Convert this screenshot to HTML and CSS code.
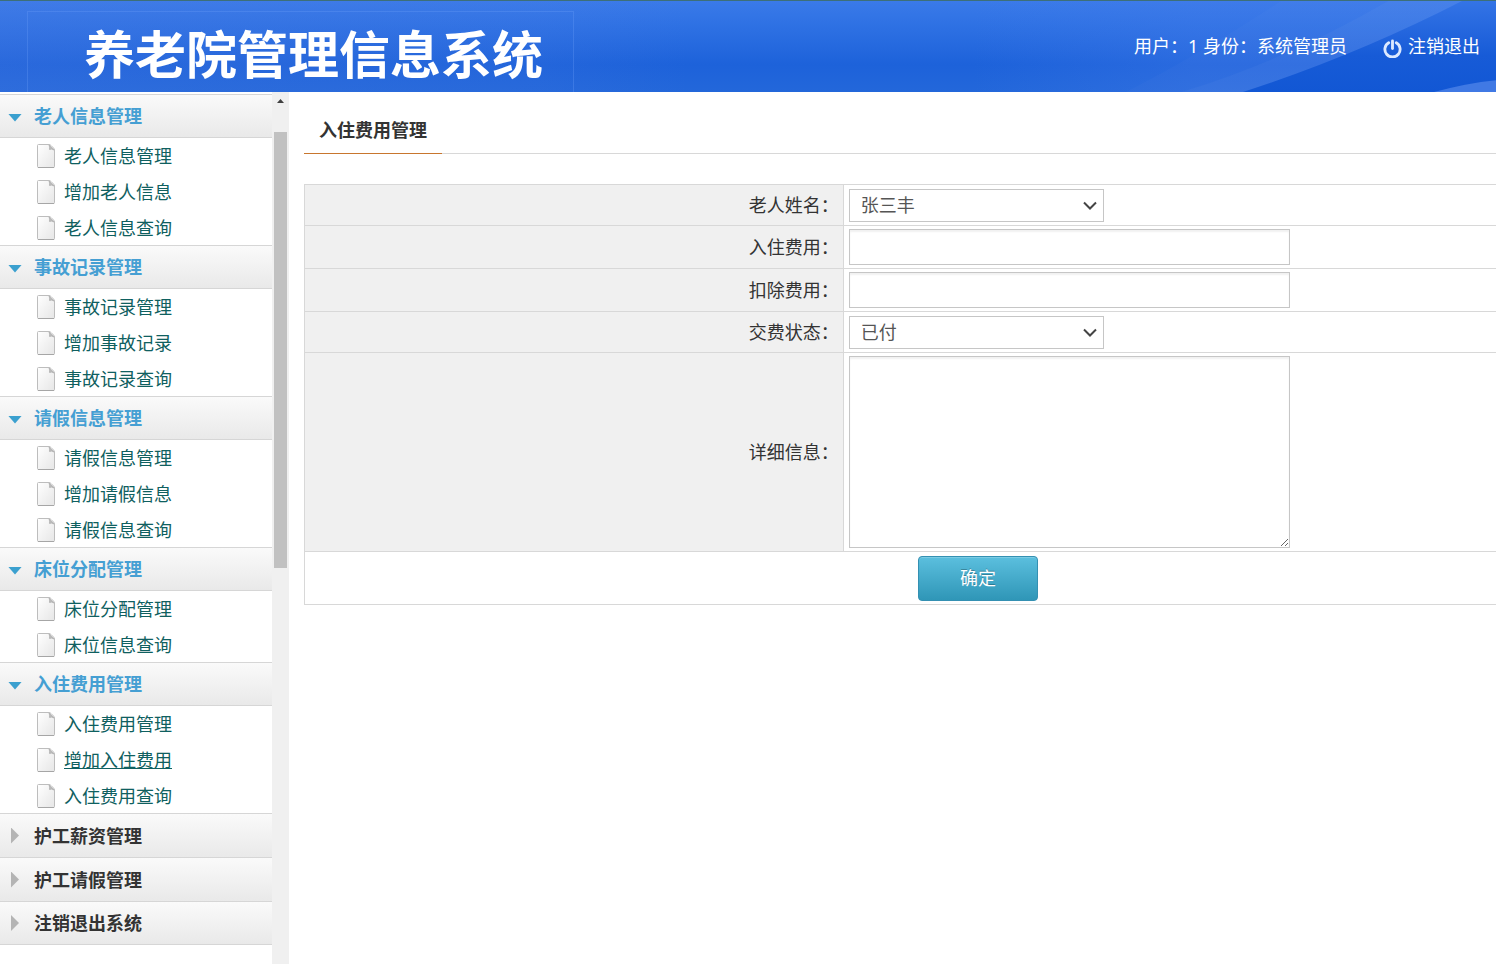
FILE: index.html
```html
<!DOCTYPE html>
<html lang="zh-CN">
<head>
<meta charset="utf-8">
<title>养老院管理信息系统</title>
<link rel="stylesheet" href="styles.css">
</head>
<body>
<svg class="sprite" aria-hidden="true">
  <defs>
    <linearGradient id="paper" x1="0" y1="0" x2="1" y2="1">
      <stop offset="0" stop-color="#ffffff"/>
      <stop offset="1" stop-color="#e6e6e6"/>
    </linearGradient>
    <symbol id="doc" viewBox="0 0 20 26">
      <path d="M2.500 1.500H13Q14 1.500 15 2.500L17.500 5Q18.500 6 18.500 7V23.500Q18.500 24.500 17.500 24.500H2.500Q1.500 24.500 1.500 23.500V2.500Q1.500 1.500 2.500 1.500Z" fill="url(#paper)" stroke="#bdbdbd"/>
      <path d="M2 24.500H18" stroke="#a6a6a6"/>
      <path d="M13 2L18 7Q15.500 5.500 13.500 6.500Q14 4 13 2Z" fill="#bcbcbc" stroke="#b0b0b0" stroke-width=".8"/>
    </symbol>
    <symbol id="chevron" viewBox="0 0 14 9">
      <path d="M1 1.500L7 7.500L13 1.500" fill="none" stroke="#444" stroke-width="2"/>
    </symbol>
  </defs>
</svg>

<header class="header">
  <svg class="header-art" viewBox="0 0 400 92" preserveAspectRatio="none" aria-hidden="true">
    <defs>
      <linearGradient id="deep" x1="0" y1="0" x2="0" y2="1">
        <stop offset="0" stop-color="#3474e6"/>
        <stop offset=".6" stop-color="#175bd7"/>
        <stop offset="1" stop-color="#1257d4"/>
      </linearGradient>
    </defs>
    <path d="M30 92Q110 50 185 0H400V92Z" fill="#fff" fill-opacity=".02"/>
    <path d="M85 92Q190 60 292 0H400V92Z" fill="#fff" fill-opacity=".03"/>
    <path d="M147 92Q260 55 366 0H400V92Z" fill="url(#deep)"/>
    <path d="M338 92Q370 83 400 80V92Z" fill="#4079e4"/>
  </svg>
  <div class="brand"><h1 class="brand-title">养老院管理信息系统</h1></div>
  <div class="account">
    <span>用户：1 身份：系统管理员</span>
    <a class="logout" href="#">
      <svg class="power" viewBox="0 0 20 20" aria-hidden="true">
        <path d="M6 4A8 8 0 1 0 14 4" fill="none" stroke="#dce9ff" stroke-width="3" stroke-linecap="round"/>
        <path d="M10 2V10" stroke="#dce9ff" stroke-width="3" stroke-linecap="round"/>
      </svg>
      注销退出
    </a>
  </div>
</header>

<div class="body">
  <aside class="sidebar">
    <nav class="menu">
      <section class="group">
        <button class="group-head open" type="button">老人信息管理</button>
        <ul class="items">
          <li><a href="#"><svg class="doc"><use href="#doc"/></svg><span>老人信息管理</span></a></li>
          <li><a href="#"><svg class="doc"><use href="#doc"/></svg><span>增加老人信息</span></a></li>
          <li><a href="#"><svg class="doc"><use href="#doc"/></svg><span>老人信息查询</span></a></li>
        </ul>
      </section>
      <section class="group">
        <button class="group-head open" type="button">事故记录管理</button>
        <ul class="items">
          <li><a href="#"><svg class="doc"><use href="#doc"/></svg><span>事故记录管理</span></a></li>
          <li><a href="#"><svg class="doc"><use href="#doc"/></svg><span>增加事故记录</span></a></li>
          <li><a href="#"><svg class="doc"><use href="#doc"/></svg><span>事故记录查询</span></a></li>
        </ul>
      </section>
      <section class="group">
        <button class="group-head open" type="button">请假信息管理</button>
        <ul class="items">
          <li><a href="#"><svg class="doc"><use href="#doc"/></svg><span>请假信息管理</span></a></li>
          <li><a href="#"><svg class="doc"><use href="#doc"/></svg><span>增加请假信息</span></a></li>
          <li><a href="#"><svg class="doc"><use href="#doc"/></svg><span>请假信息查询</span></a></li>
        </ul>
      </section>
      <section class="group">
        <button class="group-head open" type="button">床位分配管理</button>
        <ul class="items">
          <li><a href="#"><svg class="doc"><use href="#doc"/></svg><span>床位分配管理</span></a></li>
          <li><a href="#"><svg class="doc"><use href="#doc"/></svg><span>床位信息查询</span></a></li>
        </ul>
      </section>
      <section class="group">
        <button class="group-head open" type="button">入住费用管理</button>
        <ul class="items">
          <li><a href="#"><svg class="doc"><use href="#doc"/></svg><span>入住费用管理</span></a></li>
          <li><a class="current" href="#"><svg class="doc"><use href="#doc"/></svg><span>增加入住费用</span></a></li>
          <li><a href="#"><svg class="doc"><use href="#doc"/></svg><span>入住费用查询</span></a></li>
        </ul>
      </section>
      <section class="group"><button class="group-head" type="button">护工薪资管理</button></section>
      <section class="group"><button class="group-head" type="button">护工请假管理</button></section>
      <section class="group"><button class="group-head" type="button">注销退出系统</button></section>
    </nav>
    <div class="scrollbar" aria-hidden="true">
      <span class="scroll-up"></span>
      <span class="scroll-thumb"></span>
    </div>
  </aside>

  <main class="main">
    <div class="tabs"><h2 class="tab">入住费用管理</h2></div>
    <form>
      <table class="form-table">
        <tr class="short">
          <th><label for="name">老人姓名：</label></th>
          <td>
            <div class="select">
              <select id="name"><option>张三丰</option></select>
              <svg class="chevron" aria-hidden="true"><use href="#chevron"/></svg>
            </div>
          </td>
        </tr>
        <tr>
          <th><label for="fee">入住费用：</label></th>
          <td><input id="fee" type="text"></td>
        </tr>
        <tr>
          <th><label for="deduct">扣除费用：</label></th>
          <td><input id="deduct" type="text"></td>
        </tr>
        <tr class="short">
          <th><label for="state">交费状态：</label></th>
          <td>
            <div class="select">
              <select id="state"><option>已付</option></select>
              <svg class="chevron" aria-hidden="true"><use href="#chevron"/></svg>
            </div>
          </td>
        </tr>
        <tr>
          <th><label for="detail">详细信息：</label></th>
          <td><textarea id="detail"></textarea></td>
        </tr>
        <tr class="submit-row">
          <td colspan="2"><button class="submit" type="button">确定</button></td>
        </tr>
      </table>
    </form>
  </main>
</div>
</body>
</html>
```

FILE: styles.css
```css
* { box-sizing: border-box; }

html, body { height: 100%; }

body {
  margin: 0;
  display: flex;
  flex-direction: column;
  overflow: hidden;
  background: #fff;
  color: #333;
  font: 18px/24px "Noto Sans", "Noto Sans CJK SC", sans-serif;
}

button, input, select, textarea { font: inherit; }

.sprite { position: absolute; width: 0; height: 0; }

/* header */
.header {
  position: relative;
  flex: none;
  display: flex;
  justify-content: space-between;
  height: 92px;
  padding: 0 16px 0 27px;
  border-top: 1px solid #3d6f78;
  background:
    linear-gradient(90deg, rgba(80, 125, 225, .25), rgba(80, 125, 225, .12) 36%, transparent 46%, transparent 65%, rgba(70, 125, 235, .3) 80%),
    linear-gradient(#3a7ae8, #3375e6 15%, #1d62da 70%, #2367da);
  color: #fff;
}

.header-art { position: absolute; top: 0; right: 0; width: 400px; height: 100%; }

.brand {
  position: relative;
  margin-top: 10px;
  padding: 0 30px 0 56px;
  border: 1px solid rgba(110, 160, 250, .3);
  border-bottom: 0;
}

.brand-title {
  margin: 0;
  font-size: 51px;
  line-height: 84px;
  font-weight: 700;
  white-space: nowrap;
}

.account {
  position: relative;
  display: flex;
  gap: 36px;
  height: 90px;
  align-items: center;
  white-space: nowrap;
}

.logout { display: flex; align-items: center; gap: 6px; color: #fff; text-decoration: none; }
.power { width: 19px; height: 19px; margin-top: 4px; }

/* sidebar */
.body { flex: 1; display: flex; min-height: 0; }

.sidebar { flex: none; display: flex; width: 289px; }

.menu { flex: 1; padding-top: 2px; overflow: hidden; }

.group-head {
  display: flex;
  align-items: center;
  width: 100%;
  height: 44px;
  padding: 0;
  border: 0;
  border-top: 1px solid #d6d6d6;
  background: linear-gradient(#fafafa, #e9e9e9);
  color: #333;
  font-weight: 700;
  text-align: left;
}

.group-head::before {
  content: "";
  width: 8px;
  height: 16px;
  margin: 0 15px 0 11px;
  background: #b4b4b4;
  clip-path: polygon(0 0, 100% 50%, 0 100%);
}

.group-head.open { border-bottom: 1px solid #d6d6d6; color: #459fd3; }

.group-head.open::before {
  width: 14px;
  height: 8px;
  margin: 3px 12px 0 8px;
  background: #3ba0cf;
  clip-path: polygon(0 0, 100% 0, 50% 100%);
}

.group:last-child .group-head { border-bottom: 1px solid #d6d6d6; }

.items { margin: 0 0 -1px; padding: 0; list-style: none; }

/* keeps the next heading's top border above the last item */
.group { position: relative; }

.items a {
  display: flex;
  align-items: center;
  gap: 8px;
  height: 36px;
  padding-left: 36px;
  color: #0f6060;
  text-decoration: none;
}

.items .current { text-decoration: underline; }

.doc { width: 20px; height: 26px; }

.scrollbar {
  display: flex;
  flex-direction: column;
  align-items: center;
  width: 17px;
  background: #f0f0f0;
}

.scroll-up {
  width: 7px;
  height: 4px;
  margin: 7px 0 29px;
  background: #404040;
  clip-path: polygon(50% 0, 100% 100%, 0 100%);
}

.scroll-thumb { width: 13px; height: 50%; background: #c1c1c1; }

/* content */
.main { flex: 1; min-width: 0; padding: 16px 0 0 15px; overflow: hidden; }

.tabs { display: flex; margin-bottom: 30px; border-bottom: 1px solid #d8d8d8; }

.tab {
  margin: 0 0 -1px;
  padding: 0 15px;
  border-bottom: 1px solid #c8762e;
  font-size: 18px;
  line-height: 45px;
  font-weight: 700;
}

.form-table {
  width: calc(100% + 156px);
  border-collapse: collapse;
  border: 1px solid #d8d8d8;
}

.form-table th, .form-table td { padding: 3px 5px; border: 1px solid #d8d8d8; }

.form-table th {
  width: 40%;
  padding-right: 4px;
  background: #f0f0f0;
  font-weight: 400;
  text-align: right;
}

.short { height: 41px; }

.form-table input, .form-table select, .form-table textarea {
  display: block;
  border: 1px solid #c6c6c6;
  border-radius: 0;
  background-color: #fff;
  color: #555;
}

.form-table input, .form-table textarea {
  width: 441px;
  height: 36px;
  padding: 4px 8px;
  box-shadow: inset 0 2px 2px rgba(0, 0, 0, .06);
}

.form-table textarea { height: 192px; }

.select { position: relative; width: 255px; }

.form-table select {
  width: 100%;
  height: 33px;
  padding: 0 32px 0 11px;
  appearance: none;
}

.chevron {
  position: absolute;
  top: 12px;
  right: 7px;
  width: 14px;
  height: 9px;
  pointer-events: none;
}

.submit-row { height: 53px; text-align: center; }

.submit {
  display: block;
  width: 120px;
  height: 45px;
  margin: 0 auto;
  border: 1px solid #3490b2;
  border-radius: 4px;
  background: linear-gradient(#5bbfde, #2f96b7);
  box-shadow: inset 0 1px 0 rgba(255, 255, 255, .2);
  color: #fff;
  text-shadow: 0 -1px 0 rgba(0, 0, 0, .25);
}
```
